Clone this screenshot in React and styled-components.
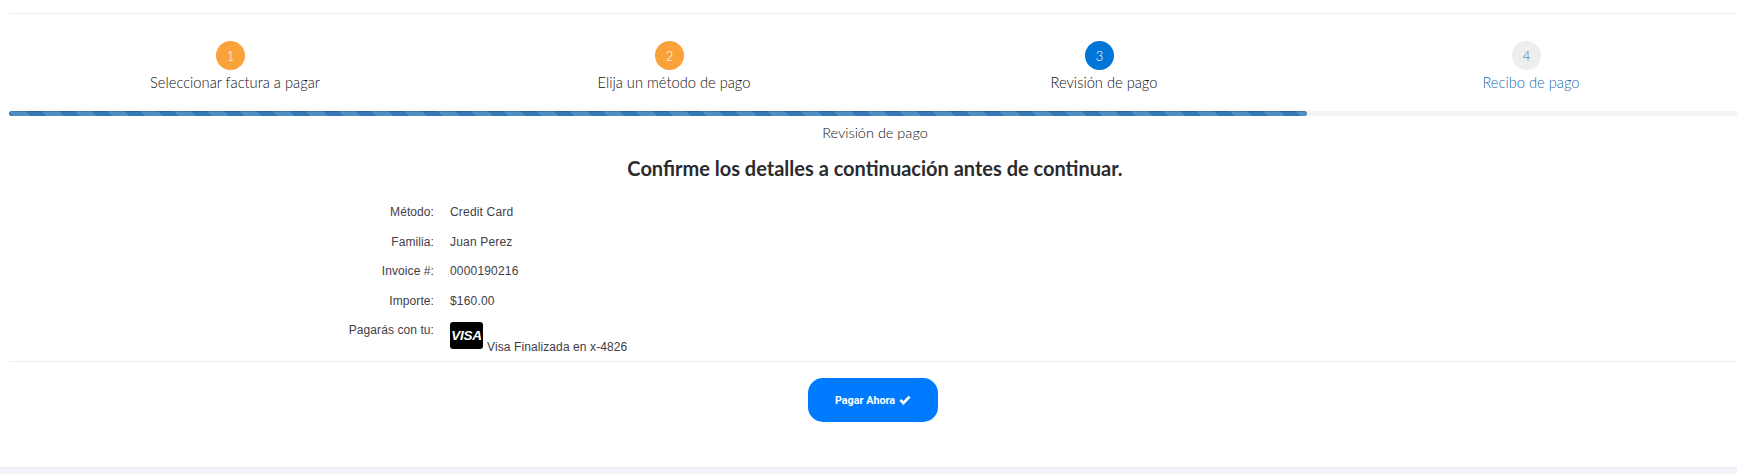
import React from "react";
import styled, { createGlobalStyle } from "styled-components";

const GlobalStyle = createGlobalStyle`
  html, body {
    margin: 0;
    padding: 0;
    background: #f2f3f8;
  }
`;

const Page = styled.div`
  height: 474px;
  overflow: hidden;
  background: #f2f3f8;
`;

const Panel = styled.div`
  height: 468px;
  box-sizing: border-box;
  padding: 13px 0 0 9px;
  background: #fff;
  border-bottom: 1px solid #ebedf2;
`;

const Steps = styled.div`
  display: grid;
  grid-template-columns: 452px 426px 434px 420px;
  padding: 27px 0 19px;
  border-top: 1px solid #ebedf2;
`;

const Step = styled.div`
  display: flex;
  flex-direction: column;
  align-items: center;
  font-family: "Lato", sans-serif;
`;

const StepCircle = styled.span`
  display: flex;
  align-items: center;
  justify-content: center;
  width: 29px;
  height: 29px;
  margin: 0 9px 2px 0;
  border-radius: 50%;
  font-size: 13px;
  font-weight: 300;
  background: ${(p) => p.$bg};
  color: ${(p) => p.$color};
`;

const StepLabel = styled.span`
  font-size: 14.7px;
  font-weight: 300;
  line-height: 20px;
  color: ${(p) => p.$color};
`;

const ProgressTrack = styled.div`
  height: 5px;
  background: #f3f3f3;
`;

const ProgressFill = styled.div`
  height: 100%;
  border-radius: 3px;
  background-color: #337ab7;
  background-image: linear-gradient(
    45deg,
    rgba(255, 255, 255, 0.15) 25%,
    transparent 25%,
    transparent 50%,
    rgba(255, 255, 255, 0.15) 50%,
    rgba(255, 255, 255, 0.15) 75%,
    transparent 75%,
    transparent
  );
  background-size: 33px 33px;
  box-shadow: inset 0 1px 0 rgba(0, 0, 0, 0.15);
`;

const Subtitle = styled.div`
  margin-top: 7px;
  padding-left: 4px;
  text-align: center;
  font-family: "Lato", sans-serif;
  font-size: 14.5px;
  font-weight: 300;
  line-height: 20px;
  color: #111;
`;

const Heading = styled.h2`
  margin: 11px 0 20px;
  padding-left: 4px;
  text-align: center;
  font-family: "Lato", sans-serif;
  font-size: 20px;
  font-weight: 700;
  line-height: 28px;
  color: #2b2b2e;
`;

const Details = styled.div`
  display: flex;
  flex-direction: column;
  gap: 9.6px;
`;

const Row = styled.div`
  display: grid;
  grid-template-columns: 425px 1fr;
  column-gap: 16px;
  font-family: "Liberation Sans", Arial, sans-serif;
  font-size: 12px;
  line-height: 20px;
  color: #3f4047;
`;

const RowLabel = styled.div`
  text-align: right;
  letter-spacing: 0.08px;
`;

const RowValue = styled.div`
  letter-spacing: 0.18px;
`;

const CardLine = styled.div`
  display: flex;
  align-items: flex-end;
  padding-top: 2px;
  gap: 4px;
  height: 27px;
`;

const VisaBadge = styled.span`
  display: flex;
  align-items: center;
  justify-content: center;
  width: 33px;
  height: 27px;
  border-radius: 3px;
  background: #000;
  color: #fff;
  font-size: 13.5px;
  font-weight: 700;
  font-style: italic;
  letter-spacing: -0.2px;
`;

const CardText = styled.span`
  line-height: 12px;
  margin-bottom: -4px;
  letter-spacing: 0.1px;
`;

const Footer = styled.div`
  display: flex;
  justify-content: center;
  margin-top: 12px;
  padding-top: 16px;
  border-top: 1px solid #ebedf2;
`;

const PayButton = styled.button`
  display: flex;
  align-items: center;
  justify-content: center;
  gap: 4px;
  width: 130px;
  height: 44px;
  border: 0;
  border-radius: 15px;
  background: #007bff;
  color: #fff;
  font-family: "Roboto", sans-serif;
  font-size: 10.8px;
  font-weight: 700;
`;

const steps = [
  { n: 1, label: "Seleccionar factura a pagar", bg: "#f9a23a", num: "#fff", text: "#111" },
  { n: 2, label: "Elija un método de pago", bg: "#f9a23a", num: "#fff", text: "#111" },
  { n: 3, label: "Revisión de pago", bg: "#0275d8", num: "#fff", text: "#111" },
  { n: 4, label: "Recibo de pago", bg: "#eeeeee", num: "#2a6db0", text: "#1f6ab0" },
];

const details = [
  ["Método:", "Credit Card"],
  ["Familia:", "Juan Perez"],
  ["Invoice #:", "0000190216"],
  ["Importe:", "$160.00"],
];

function CheckIcon() {
  return (
    <svg width="12" height="10" viewBox="0 0 12 10" fill="none" aria-hidden="true">
      <polyline points="1.4,5 4.4,8 10.6,1.6" stroke="#fff" strokeWidth="2.7" />
    </svg>
  );
}

export default function App() {
  return (
    <Page>
      <GlobalStyle />
      <Panel>
        <Steps>
          {steps.map((s) => (
            <Step key={s.n}>
              <StepCircle $bg={s.bg} $color={s.num}>
                {s.n}
              </StepCircle>
              <StepLabel $color={s.text}>{s.label}</StepLabel>
            </Step>
          ))}
        </Steps>
        <ProgressTrack>
          <ProgressFill style={{ width: `${(1298 / 1728) * 100}%` }} />
        </ProgressTrack>
        <Subtitle>Revisión de pago</Subtitle>
        <Heading>Confirme los detalles a continuación antes de continuar.</Heading>
        <Details>
          {details.map(([label, value]) => (
            <Row key={label}>
              <RowLabel>{label}</RowLabel>
              <RowValue>{value}</RowValue>
            </Row>
          ))}
          <Row>
            <RowLabel>Pagarás con tu:</RowLabel>
            <RowValue>
              <CardLine>
                <VisaBadge>VISA</VisaBadge>
                <CardText>Visa Finalizada en x-4826</CardText>
              </CardLine>
            </RowValue>
          </Row>
        </Details>
        <Footer>
          <PayButton>
            Pagar Ahora <CheckIcon />
          </PayButton>
        </Footer>
      </Panel>
    </Page>
  );
}
